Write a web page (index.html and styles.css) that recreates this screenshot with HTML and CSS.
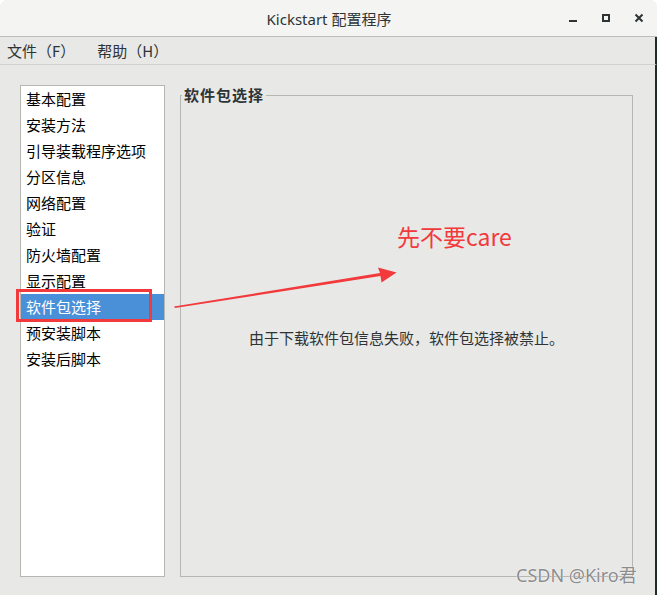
FILE: index.html
```html
<!DOCTYPE html>
<html lang="zh">
<head>
    <meta charset="UTF-8">
    <title>Kickstart 配置程序</title>
    <link rel="stylesheet" href="styles.css">
</head>
<body>
    <div class="window">
        <div class="titlebar">
            <div class="title">Kickstart 配置程序</div>
            <div class="controls">
                <svg width="10" height="10" viewBox="0 0 10 10"><rect x="1" y="7" width="8" height="2" fill="#2e3436"/></svg>
                <svg width="10" height="10" viewBox="0 0 10 10"><rect x="2" y="2" width="6" height="6" fill="none" stroke="#2e3436" stroke-width="2"/></svg>
                <svg width="10" height="10" viewBox="0 0 10 10"><path d="M1.5 1.5 L8.5 8.5 M8.5 1.5 L1.5 8.5" stroke="#2e3436" stroke-width="2"/></svg>
            </div>
        </div>
        <div class="menubar">
            <span class="menu-item">文件（F）</span>
            <span class="menu-item">帮助（H）</span>
        </div>
        <div class="content">
            <ul class="nav-list">
                <li>基本配置</li>
                <li>安装方法</li>
                <li>引导装载程序选项</li>
                <li>分区信息</li>
                <li>网络配置</li>
                <li>验证</li>
                <li>防火墙配置</li>
                <li>显示配置</li>
                <li class="selected">软件包选择</li>
                <li>预安装脚本</li>
                <li>安装后脚本</li>
            </ul>
            <fieldset class="panel">
                <legend>软件包选择</legend>
                <p class="message">由于下载软件包信息失败，软件包选择被禁止。</p>
            </fieldset>
        </div>

        <!-- annotation drawn over the screenshot -->
        <div class="mark-box"></div>
        <div class="mark-text">先不要care</div>
        <svg class="mark-arrow" width="657" height="595" viewBox="0 0 657 595">
            <polygon points="174,306.5 380,273 378,267.5 396.5,272.5 381.5,282.5 380.5,276 175,308" fill="#f2393b"/>
        </svg>
        <div class="watermark">CSDN @Kiro君</div>
    </div>
</body>
</html>
```

FILE: styles.css
```css
body {
    margin: 0;
    background: #ffffff;
    font-family: "Noto Sans", "Noto Sans CJK SC", sans-serif;
}

.window {
    position: relative;
    width: 657px;
    height: 595px;
    background: #e8e8e7;
    overflow: hidden;
    border-radius: 8px 8px 0 0;
}

.titlebar {
    height: 36px;
    background: #f4f4f3;
    border-bottom: 1px solid #bdbdb9;
    display: flex;
    align-items: center;
    justify-content: center;
    position: relative;
}

.title {
    font-size: 15px;
    color: #2e3436;
    margin-left: 1px;
}

.controls {
    position: absolute;
    right: 13px;
    top: 13px;
    display: flex;
    gap: 23px;
}

.controls svg {
    display: block;
}

.menubar {
    height: 27px;
    border-bottom: 1px solid #d2d2cf;
    border-right: 2px solid #1f2b2b;
    display: flex;
    align-items: center;
    padding-left: 7px;
    gap: 22px;
    font-family: "Noto Sans CJK SC", sans-serif;
    font-size: 15px;
    color: #2e3436;
}

.content {
    display: flex;
    align-items: flex-start;
    gap: 15px;
    padding: 20px 0 0 20px;
    height: 530px;
    box-sizing: border-box;
    border-right: 2px solid #1f2b2b;
}

.nav-list {
    list-style: none;
    margin: 0;
    padding: 0;
    width: 145px;
    height: 492px;
    box-sizing: border-box;
    background: #ffffff;
    border: 1px solid #b6b6b2;
    font-family: "Noto Sans CJK SC", sans-serif;
    font-size: 15px;
    color: #000000;
}

.nav-list li {
    height: 26px;
    line-height: 25px;
    padding-left: 5px;
    box-sizing: border-box;
}

.nav-list li.selected {
    background: #4a90d9;
    color: #ffffff;
}

.panel {
    margin: 0;
    padding: 0;
    width: 453px;
    height: 492px;
    box-sizing: border-box;
    border: 1px solid #b6b6b2;
    min-width: 0;
}

.panel legend {
    margin-left: 1px;
    padding: 0 2px;
    font-family: "Noto Sans CJK SC", sans-serif;
    font-size: 15px;
    font-weight: bold;
    line-height: 20px;
    color: #2e3436;
    letter-spacing: 1px;
}

.message {
    margin: 223px 0 0 0;
    text-align: center;
    font-family: "Noto Sans CJK SC", sans-serif;
    font-size: 15px;
    line-height: 20px;
    color: #2e3436;
}

.mark-box {
    position: absolute;
    left: 16px;
    top: 289px;
    width: 136px;
    height: 33px;
    box-sizing: border-box;
    border: 3px solid #f2393b;
}

.mark-text {
    position: absolute;
    left: 397px;
    top: 220px;
    font-family: "Noto Sans CJK SC", sans-serif;
    font-size: 23px;
    line-height: 32px;
    color: #f2393b;
}

.mark-arrow {
    position: absolute;
    left: 0;
    top: 0;
    pointer-events: none;
}

.watermark {
    position: absolute;
    left: 516px;
    top: 563px;
    font-family: "Noto Sans", "Noto Sans CJK SC", sans-serif;
    font-size: 18px;
    line-height: 24px;
    color: #8c8c8c;
    text-shadow: 0 0 1px #ffffff, 0 0 1px #ffffff;
}
```
